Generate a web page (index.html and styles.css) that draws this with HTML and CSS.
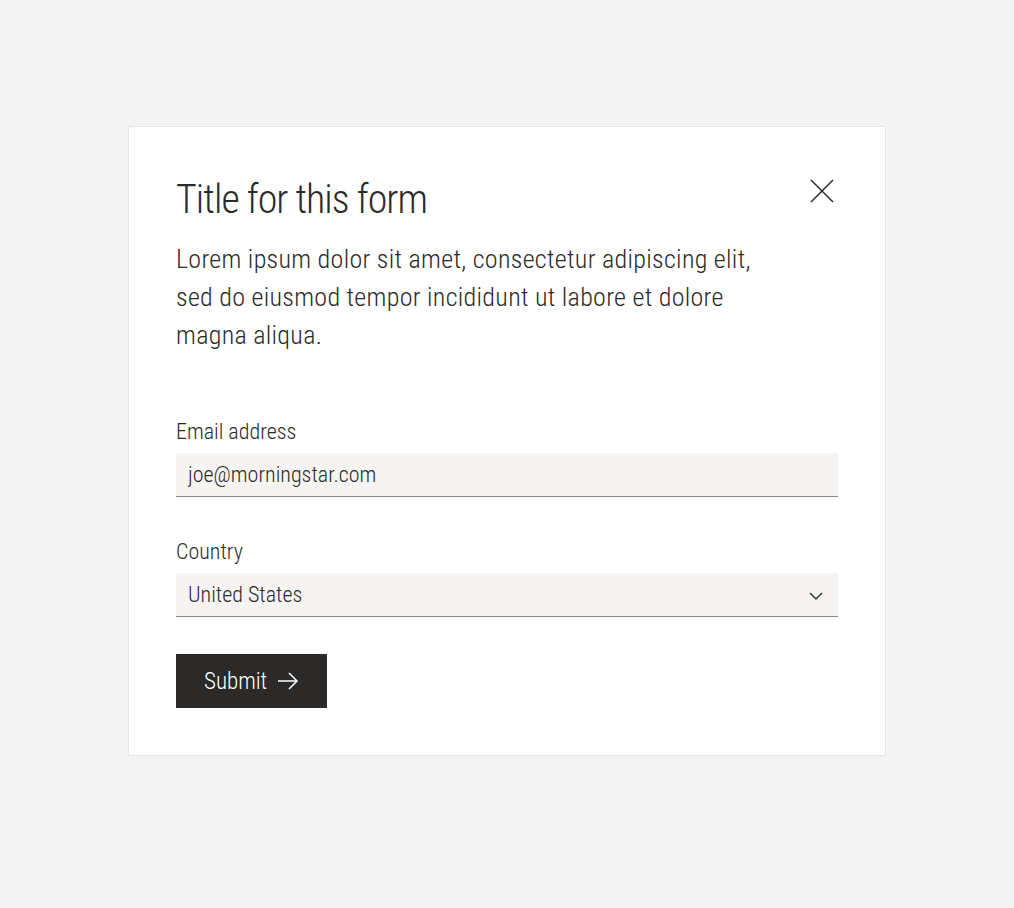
FILE: index.html
```html
<!DOCTYPE html>
<html lang="en">
<head>
    <meta charset="UTF-8">
    <meta name="viewport" content="width=device-width, initial-scale=1.0">
    <title>Title for this form</title>
    <link rel="stylesheet" href="styles.css">
</head>
<body>
    <div class="modal">
        <div class="modal-header">
            <h1 class="modal-title">Title for this form</h1>
            <button class="close-button" aria-label="Close">
                <svg width="24" height="24" viewBox="0 0 24 24" fill="none" stroke="#2b2a28" stroke-width="1.5">
                    <path d="M1 1 L23 23 M23 1 L1 23"/>
                </svg>
            </button>
        </div>
        <p class="modal-text">Lorem ipsum dolor sit amet, consectetur adipiscing elit, sed do eiusmod tempor incididunt ut labore et dolore magna aliqua.</p>

        <form class="form">
            <div class="field">
                <label class="field-label" for="email">Email address</label>
                <input class="field-input" id="email" type="text" value="joe@morningstar.com">
            </div>
            <div class="field">
                <label class="field-label" for="country">Country</label>
                <div class="select-wrap">
                    <select class="field-input field-select" id="country">
                        <option>United States</option>
                        <option>Canada</option>
                    </select>
                    <svg class="select-arrow" width="16" height="10" viewBox="0 0 16 10" fill="none" stroke="#2b2a28" stroke-width="1.4">
                        <path d="M2 2 L8 8 L14 2"/>
                    </svg>
                </div>
            </div>
            <button type="button" class="submit-button">
                Submit
                <svg width="22" height="18" viewBox="0 0 22 18" fill="none" stroke="#ffffff" stroke-width="1.5">
                    <path d="M1 9 H20 M12 1 L20 9 L12 17"/>
                </svg>
            </button>
        </form>
    </div>
</body>
</html>
```

FILE: styles.css
```css
* {
    margin: 0;
    padding: 0;
    box-sizing: border-box;
}

body {
    font-family: Roboto, "DejaVu Sans Condensed", sans-serif;
    font-stretch: 75%;
    font-weight: 300;
    background: #f4f4f4;
    color: #2b2a28;
    height: 100vh;
    padding-top: 126px;
    display: flex;
    justify-content: center;
    align-items: flex-start;
}

.modal {
    width: 758px;
    background: #ffffff;
    border: 1px solid #e6e6e6;
    padding: 47px;
}

.modal-header {
    display: flex;
    justify-content: space-between;
    align-items: flex-start;
}

.modal-title {
    font-size: 40px;
    font-weight: 300;
    line-height: 52px;
    letter-spacing: -1px;
}

.close-button {
    background: none;
    border: none;
    cursor: pointer;
    margin-top: 5px;
    margin-right: 4px;
    width: 24px;
    height: 24px;
}

.close-button svg {
    display: block;
}

.modal-text {
    font-size: 26px;
    line-height: 38px;
    letter-spacing: 0.3px;
    max-width: 595px;
    margin-top: 14px;
}

.form {
    margin-top: 65px;
}

.field {
    margin-bottom: 42px;
}

.field-label {
    display: block;
    font-size: 22px;
    line-height: 26px;
    margin-bottom: 8px;
}

.field-input {
    display: block;
    width: 100%;
    height: 44px;
    background: #f5f4f2;
    border: none;
    border-bottom: 1px solid #8a8a8a;
    padding: 0 12px;
    font-family: inherit;
    font-stretch: 75%;
    font-weight: 300;
    font-size: 22px;
    color: #2b2a28;
    outline: none;
}

.select-wrap {
    position: relative;
}

.field-select {
    appearance: none;
    -webkit-appearance: none;
    border-radius: 0;
}

.select-arrow {
    position: absolute;
    right: 14px;
    top: 18px;
    pointer-events: none;
}

.submit-button {
    display: flex;
    align-items: center;
    gap: 10px;
    height: 54px;
    padding: 0 28px;
    margin-top: -5px;
    background: #2b2a28;
    color: #ffffff;
    border: none;
    font-family: inherit;
    font-stretch: 75%;
    font-weight: 300;
    font-size: 23px;
    cursor: pointer;
}
```
